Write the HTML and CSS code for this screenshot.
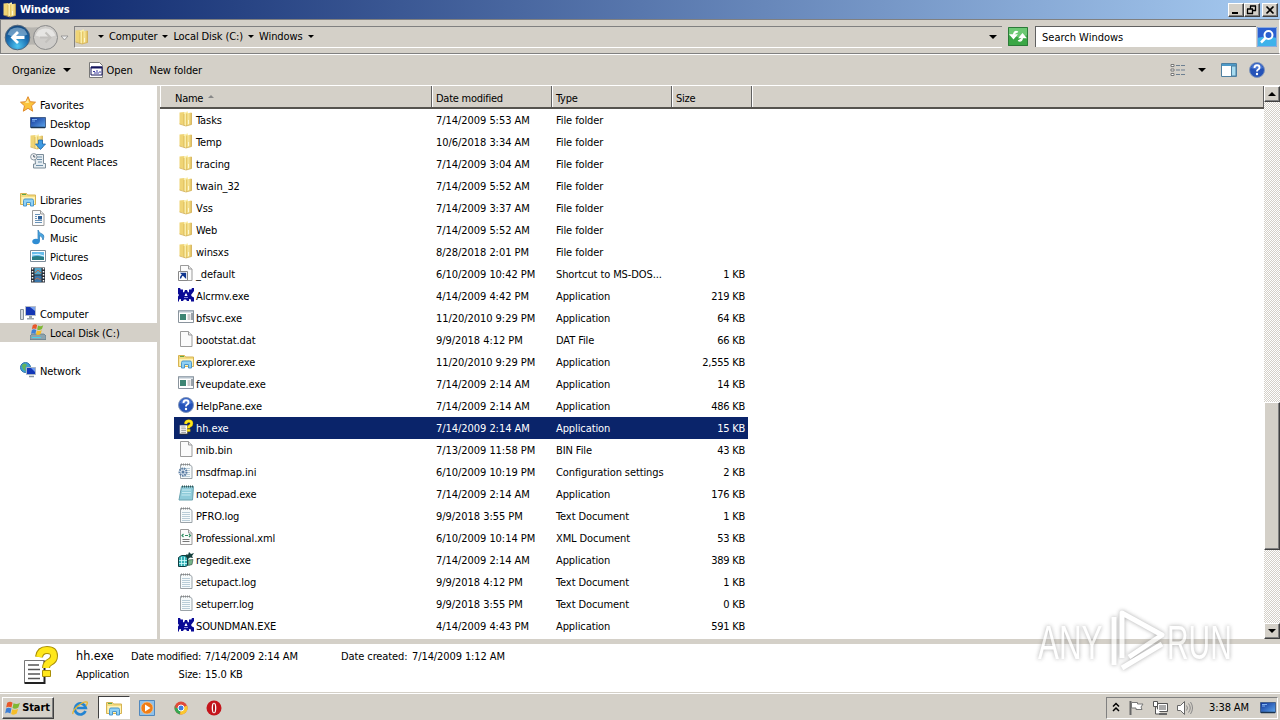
FILE: index.html
```html
<!DOCTYPE html>
<html lang="en">
<head>
    <meta charset="UTF-8">
    <title>Windows</title>
    <link rel="stylesheet" href="styles.css">
</head>
<body>
    <!-- Icons used more than once -->
    <svg class="defs" width="0" height="0">
        <defs>
            <linearGradient id="gold" x1="0" x2="1">
                <stop offset="0" stop-color="#e2bf55"/>
                <stop offset=".4" stop-color="#f8e79b"/>
                <stop offset="1" stop-color="#e0bd58"/>
            </linearGradient>
            <radialGradient id="blueBall" cx=".5" cy=".85" r=".9">
                <stop offset="0" stop-color="#4fc6f2"/>
                <stop offset=".5" stop-color="#1a6db0"/>
                <stop offset="1" stop-color="#123f73"/>
            </radialGradient>
            <linearGradient id="screen" x1="0" x2="1" y1="0" y2="1">
                <stop offset="0" stop-color="#0d2f94"/>
                <stop offset="1" stop-color="#5fa8ee"/>
            </linearGradient>
        </defs>
        <symbol id="folder" viewBox="0 0 16 16">
            <path d="M1.500 1.500l5-.5v13l-5-1z" fill="#efd475"/>
            <path d="M6 2l3-1.500h1v13l-4 1.500z" fill="#faeea9"/>
            <path d="M8 2.500l5.500-1v12l-5.500 1.500z" fill="url(#gold)"/>
            <path d="M6 3v11.500" stroke="#d6b04a" stroke-width=".7"/>
            <path d="M13.500 2v11.500l-5.500 1.500-6.500-2" fill="none" stroke="#cda748" stroke-width=".7"/>
            <path d="M10.500 9v4" stroke="#fff8d0"/>
        </symbol>
        <symbol id="page" viewBox="0 0 16 16">
            <path d="M2.500 .5h8l3.500 3.500v11.500h-11.500z" fill="#fbfbfb" stroke="#9b9b9b"/>
            <path d="M10.500 .5v3.500h3.500" fill="#e8e8e8" stroke="#9b9b9b"/>
        </symbol>
        <symbol id="text" viewBox="0 0 16 16">
            <path d="M2.500 1.500h9l2.500 2v12h-11.500z" fill="#f6fafb" stroke="#9ba3a8"/>
            <path d="M3 1.500h9" stroke="#888" stroke-width="2" stroke-dasharray="1 1"/>
            <path d="M4 5.500h8M4 7.500h8M4 9.500h8M4 11.500h8M4 13.500h8" stroke="#b9cdd8"/>
        </symbol>
        <symbol id="app" viewBox="0 0 16 16">
            <path d="M.5 1.500h15v12h-15z" fill="#fff" stroke="#8a949d"/>
            <path d="M1 2.500h14" stroke="#b7c2cc" stroke-width="2"/>
            <path d="M2 5h6v6h-6z" fill="#3d8573"/>
            <path d="M9.500 6h3M9.500 8h3M9.500 10h3" stroke="#999"/>
            <path d="M14 4v7" stroke="#345"/>
        </symbol>
        <symbol id="crab" viewBox="0 0 16 16">
            <path d="M0 1h2l1 2 1-1 1 1v2l1 .5 1-2.500h2l1 2.500 1-.5v-2l1-1 1 1 1-2h2v3l-3 4 1 1.500 2 1v4h-3v-2l-2-.5v2h-2l-1-1.500h-2l-1 1.500h-2v-2l-2 .5v2h-3v-4l2-1 1-1.500-3-4z" fill="#0a0a96"/>
            <path d="M6.500 9l1-2.500h1l1 2.500z" fill="#fff"/>
            <path d="M6 10.500h4" stroke="#8888d8"/>
        </symbol>
        <symbol id="explorer" viewBox="0 0 16 16">
            <path d="M.5 2.500h6l1 1.500h8v9.500h-15z" fill="#f4dc81" stroke="#d6b352"/>
            <path d="M1.500 6h13.500v7h-13.500z" fill="#fff2b5"/>
            <path d="M2 3.500h4" stroke="#5ea64c"/>
            <path d="M3.500 15v-5.500q0-1.500 1.500-1.500h7q1.500 0 1.500 1.500v5.500h-3v-3.500h-4v3.500z" fill="#8fd0f4" stroke="#4a97cc"/>
        </symbol>
        <symbol id="help" viewBox="0 0 16 16">
            <circle cx="8" cy="8" r="7.500" fill="#2452b8" stroke="#7f95bb"/>
            <path d="M2 6a6.200 6 0 0 1 12 0q-6 3-12 0z" fill="#5f8be0" opacity=".6"/>
            <path d="M5.500 6q0-2.700 2.500-2.700t2.500 2.200q0 1.300-1.300 2t-1.200 2" fill="none" stroke="#fff" stroke-width="1.900"/>
            <circle cx="8" cy="12" r="1.200" fill="#fff"/>
        </symbol>
        <symbol id="hh" viewBox="0 0 36 40">
            <path d="M2.500 15.500h20v22h-20z" fill="#fff" stroke="#777"/>
            <path d="M22.500 16v22h-20" fill="none" stroke="#222" stroke-width="2"/>
            <path d="M6 20h11M6 24.500h12M6 29h12M6 33.500h12" stroke="#555" stroke-width="1.500"/>
            <path d="M17 12q1-7 8-7t7 6q0 4-4 6t-4 6" fill="none" stroke="#a88e08" stroke-width="8"/>
            <path d="M17 12q1-7 8-7t7 6q0 4-4 6t-4 6" fill="none" stroke="#ffe71a" stroke-width="6"/>
            <path d="M20.500 25.500h8v6h-8z" fill="#ffe71a" stroke="#a88e08"/>
        </symbol>
        <symbol id="monitor" viewBox="0 0 16 16">
            <path d="M.5 2.500h15v10h-15z" fill="url(#screen)" stroke="#45618c"/>
            <path d="M1 12.500h14" stroke="#1b3450" stroke-width="1.500"/>
            <path d="M2 4.500h5M2 6h3" stroke="#7fb1ef"/>
        </symbol>
        <symbol id="flag" viewBox="0 0 16 16">
            <path d="M2 3q3-2 5 0l-1 4.500q-3-1.500-5 0z" fill="#e8582a"/>
            <path d="M8 3.500q3 1.500 6-.5l-1.500 4.500q-3 2-5.500 .500z" fill="#7fb833"/>
            <path d="M1 8.500q2-1.500 5 0l-1 4.500q-3-1.500-5 0z" fill="#3c7fd6"/>
            <path d="M6.800 9q3 1.500 5.500-.300l-1.300 4.500q-3 1.800-5.300 .300z" fill="#f5bd2a"/>
        </symbol>
    </svg>

    <!-- Title bar -->
    <header class="titlebar">
        <svg class="icon"><use href="#folder"/></svg>
        <h1>Windows</h1>
        <div class="window-buttons">
            <button><svg width="12" height="10"><path d="M2 8h6" stroke="#000" stroke-width="2"/></svg></button>
            <button><svg width="12" height="10"><path d="M4 1h6M4.500 1v3M9.500 1v5M7 5.500h3M1 4h6M1.500 4v5M6.500 4v5M1 8.500h6" stroke="#000" fill="none" stroke-width="1.300"/></svg></button>
            <button class="close"><svg width="12" height="10"><path d="M2.500 1.500l7 7M9.500 1.500l-7 7" stroke="#000" stroke-width="1.700"/></svg></button>
        </div>
    </header>

    <!-- Address bar -->
    <div class="addressbar">
        <svg class="nav-buttons" width="70" height="30" viewBox="0 0 70 30">
            <path d="M14 3q16 5 32 0v22q-16-5-32 0z" fill="#b7b5b0"/>
            <circle cx="15.500" cy="15.500" r="12.300" fill="url(#blueBall)" stroke="#53677c"/>
            <path d="M5.500 12.500a10.500 10 0 0 1 20 0q-10 5-20 0z" fill="#a9cbe4" opacity=".55"/>
            <path d="M22.500 15.500h-11M16 10l-5.500 5.500 5.500 5.500" fill="none" stroke="#fff" stroke-width="2.800"/>
            <circle cx="43.500" cy="15.500" r="12" fill="#cfcdca" stroke="#8b8b8b"/>
            <path d="M33.500 13.500a10.500 10 0 0 1 20 0q-10 4-20 0z" fill="#e6e5e3"/>
            <path d="M38 15.500h10M43.500 10.500l5 5-5 5" fill="none" stroke="#c2c0bd" stroke-width="2"/>
            <path d="M59 14h7l-3.500 4z" fill="#eee" stroke="#8a8a8a" stroke-width=".8"/>
        </svg>
        <div class="path">
            <svg class="icon"><use href="#folder"/></svg>
            <i class="arrow first"></i><span>Computer</span>
            <i class="arrow"></i><span>Local Disk (C:)</span>
            <i class="arrow"></i><span>Windows</span>
            <i class="arrow"></i>
            <i class="arrow big last"></i>
        </div>
        <svg class="refresh" width="20" height="19" viewBox="0 0 20 19">
            <path d="M0 0h20v19h-20z" fill="#3aa745"/>
            <path d="M0 0h20v8q-10 4-20 0z" fill="#6cc873"/>
            <path d="M.5 .5h19v18h-19z" fill="none" stroke="#2c7a38"/>
            <path d="M10 5q-4-2-4.500 3M2.500 8h6l-3 3.500zM10 13.500q4 2 4.500-3M11.500 10.500h6l-3-3.500z" fill="#fff" stroke="#fff" stroke-width="1.300"/>
        </svg>
        <div class="search">Search Windows</div>
        <svg class="search-button" width="20" height="20" viewBox="0 0 20 20">
            <path d="M0 0h20v20h-20z" fill="#2b5fd0"/>
            <path d="M0 11q10-3 20 0v9h-20z" fill="#3fb2ea"/>
            <path d="M.5 .5h19v19h-19z" fill="none" stroke="#8eabdc"/>
            <circle cx="11.500" cy="8" r="4" fill="#2b5fd0" stroke="#fff" stroke-width="2"/>
            <path d="M8.500 11l-4.500 4.500" stroke="#fff" stroke-width="2.500"/>
        </svg>
    </div>

    <!-- Command bar -->
    <div class="toolbar">
        <span class="organize">Organize</span><i class="arrow big"></i>
        <svg class="icon open-icon" viewBox="0 0 16 16">
            <path d="M1.500 .5h10l3 3v12h-13z" fill="#fff" stroke="#777"/>
            <path d="M3 5h11v8h-11z" fill="#fff" stroke="#14145c"/>
            <path d="M3 5.500h11" stroke="#14145c" stroke-width="2"/>
            <path d="M5 9.500h2M8 9h2M11 10h2M6 11h5" stroke="#3b3ba0"/>
        </svg>
        <span class="open">Open</span>
        <span>New folder</span>
        <div class="view-tools">
            <svg width="16" height="14"><path d="M1 1.500h3v2h-3zM1 6h3v2h-3zM1 10.500h3v2h-3z" fill="#fff" stroke="#777"/><path d="M6 2.500h4M11 2.500h4M6 7h4M11 7h4M6 11.500h4M11 11.500h4" stroke="#6c7f91"/></svg>
            <i class="arrow big"></i>
            <svg class="preview" width="16" height="14"><path d="M.5 .5h15v13h-15z" fill="#fff" stroke="#4d7fa0"/><path d="M1 2h14" stroke="#4d9ac8" stroke-width="2"/><path d="M10.500 3h4.500v10h-4.500z" fill="#a7dcf1" stroke="#4d7fa0"/></svg>
            <svg class="icon"><use href="#help"/></svg>
        </div>
    </div>

    <main>
        <!-- Navigation pane -->
        <nav>
            <div class="group">
                <div class="item top"><svg class="icon" viewBox="0 0 16 16"><path d="M8 .7l2.200 5 5.300.5-4 3.600 1.200 5.400-4.700-2.900-4.700 2.900 1.200-5.400-4-3.600 5.300-.5z" fill="#fbc43c" stroke="#e08a2c"/><path d="M8 3l1 4h-4z" fill="#ffe99a"/></svg><span>Favorites</span></div>
                <div class="item"><svg class="icon"><use href="#monitor"/></svg><span>Desktop</span></div>
                <div class="item"><svg class="icon" viewBox="0 0 16 16"><use href="#folder" x="-1" width="16" height="16"/><path d="M8.500 6h4v4h3l-5 5.500-5-5.500h3z" fill="#3f9be3" stroke="#1c64ab" stroke-width=".8"/></svg><span>Downloads</span></div>
                <div class="item"><svg class="icon" viewBox="0 0 16 16"><path d="M4.500 1.500h9v9h2v4.500h-12v-4h2z" fill="#e6edf2" stroke="#7b8c99"/><path d="M7 4h5M7 6.500h5M8 9h4M6 12.500h7" stroke="#6e8fa8"/><circle cx="3.800" cy="3.800" r="3.200" fill="#f5f5f5" stroke="#8896a0"/><path d="M3.800 2v2h1.500" fill="none" stroke="#456"/></svg><span>Recent Places</span></div>
            </div>
            <div class="group">
                <div class="item top"><svg class="icon"><use href="#explorer"/></svg><span>Libraries</span></div>
                <div class="item"><svg class="icon" viewBox="0 0 16 16"><use href="#page" width="16" height="16"/><path d="M5 4.500h5M5 6.500h2M5 8.500h2M5 10.500h7M5 12.500h7" stroke="#6a93b8"/><path d="M8 6h4v3.500h-4z" fill="#2d5f97"/></svg><span>Documents</span></div>
                <div class="item"><svg class="icon" viewBox="0 0 16 16"><path d="M8 12v-11q1 3 4 4t1 6q0-3-3.500-4.500v6" fill="#4aa6e0" stroke="#2575b4" stroke-width=".7"/><ellipse cx="6" cy="12.500" rx="3.700" ry="2.800" fill="#2f8dd3"/></svg><span>Music</span></div>
                <div class="item"><svg class="icon" viewBox="0 0 16 16"><path d="M.5 2.500h15v11h-15z" fill="#fff" stroke="#7d8d9b"/><path d="M2 4h12v8h-12z" fill="#67bceb"/><path d="M2 9q4-2 12 0v3h-12z" fill="#287d86"/><path d="M2 7q6-2 12 1" stroke="#e1f5ff" fill="none"/></svg><span>Pictures</span></div>
                <div class="item"><svg class="icon" viewBox="0 0 16 16"><path d="M1 .5h14v15h-14z" fill="#272c35"/><path d="M2.500 1v14M13.500 1v14" stroke="#fff" stroke-width="1.500" stroke-dasharray="1.500 1.500"/><path d="M4.500 1h7v6.500h-7z" fill="#55a5c9"/><path d="M4.500 8.500h7v6.500h-7z" fill="#3a77ab"/><path d="M5 6l3-3 3 3M5 13l2-2 4 2" stroke="#b46b50" fill="none"/></svg><span>Videos</span></div>
            </div>
            <div class="group">
                <div class="item top"><svg class="icon" viewBox="0 0 16 16"><path d="M.5 4.500h3v10h-3z" fill="#d5dade" stroke="#86919a"/><path d="M5.500 1.500h10v9h-10z" fill="#1436b4" stroke="#b7bec8"/><path d="M10 2h5v4z" fill="#7ba4f0"/><path d="M9 11h3v2h2v1.500h-7v-1.500h2z" fill="#9aa5ae"/></svg><span>Computer</span></div>
                <div class="item selected"><svg class="icon" viewBox="0 0 16 16"><path d="M2 10h12l2 2v3.500h-16v-3.500z" fill="#8da3ae" stroke="#5a7482" stroke-width=".7"/><path d="M2 13.500h9" stroke="#49d3e8"/><use href="#flag" x="1" y="-1.500" width="14" height="14"/></svg><span>Local Disk (C:)</span></div>
            </div>
            <div class="group">
                <div class="item top"><svg class="icon" viewBox="0 0 16 16"><circle cx="5.500" cy="5.500" r="5" fill="#3e9ed4" stroke="#2e73a8"/><path d="M2 3q3-3 5 0l-2 3 1 3q-4-1-4-6z" fill="#63b45a"/><path d="M6.500 5.500h9v7h-9z" fill="#1237b8" stroke="#aab6c5"/><path d="M11 6h4v4z" fill="#6f9cf0"/><path d="M9 14.500h5" stroke="#8795a2" stroke-width="1.500"/></svg><span>Network</span></div>
            </div>
        </nav>

        <!-- File list -->
        <section class="files">
            <div class="head">
                <span>Name<i class="sort"></i></span><span>Date modified</span><span>Type</span><span>Size</span><span></span>
            </div>
            <div class="row"><svg class="icon"><use href="#folder"/></svg><span>Tasks</span><span>7/14/2009 5:53 AM</span><span>File folder</span></div>
            <div class="row"><svg class="icon"><use href="#folder"/></svg><span>Temp</span><span>10/6/2018 3:34 AM</span><span>File folder</span></div>
            <div class="row"><svg class="icon"><use href="#folder"/></svg><span>tracing</span><span>7/14/2009 3:04 AM</span><span>File folder</span></div>
            <div class="row"><svg class="icon"><use href="#folder"/></svg><span>twain_32</span><span>7/14/2009 5:52 AM</span><span>File folder</span></div>
            <div class="row"><svg class="icon"><use href="#folder"/></svg><span>Vss</span><span>7/14/2009 3:37 AM</span><span>File folder</span></div>
            <div class="row"><svg class="icon"><use href="#folder"/></svg><span>Web</span><span>7/14/2009 5:52 AM</span><span>File folder</span></div>
            <div class="row"><svg class="icon"><use href="#folder"/></svg><span>winsxs</span><span>8/28/2018 2:01 PM</span><span>File folder</span></div>
            <div class="row"><svg class="icon" viewBox="0 0 16 16"><use href="#page" width="16" height="16"/><path d="M.5 6.500h9v9h-9z" fill="#fff" stroke="#888"/><path d="M2.500 13.500q0-3 3-4M3.500 8.500h4v4z" fill="#12378f" stroke="#12378f" stroke-width="1.300"/></svg><span>_default</span><span>6/10/2009 10:42 PM</span><span>Shortcut to MS-DOS...</span><span>1 KB</span></div>
            <div class="row"><svg class="icon"><use href="#crab"/></svg><span>Alcrmv.exe</span><span>4/14/2009 4:42 PM</span><span>Application</span><span>219 KB</span></div>
            <div class="row"><svg class="icon"><use href="#app"/></svg><span>bfsvc.exe</span><span>11/20/2010 9:29 PM</span><span>Application</span><span>64 KB</span></div>
            <div class="row"><svg class="icon"><use href="#page"/></svg><span>bootstat.dat</span><span>9/9/2018 4:12 PM</span><span>DAT File</span><span>66 KB</span></div>
            <div class="row"><svg class="icon"><use href="#explorer"/></svg><span>explorer.exe</span><span>11/20/2010 9:29 PM</span><span>Application</span><span>2,555 KB</span></div>
            <div class="row"><svg class="icon"><use href="#app"/></svg><span>fveupdate.exe</span><span>7/14/2009 2:14 AM</span><span>Application</span><span>14 KB</span></div>
            <div class="row"><svg class="icon"><use href="#help"/></svg><span>HelpPane.exe</span><span>7/14/2009 2:14 AM</span><span>Application</span><span>486 KB</span></div>
            <div class="row active"><svg class="icon"><use href="#hh"/></svg><span>hh.exe</span><span>7/14/2009 2:14 AM</span><span>Application</span><span>15 KB</span></div>
            <div class="row"><svg class="icon"><use href="#page"/></svg><span>mib.bin</span><span>7/13/2009 11:58 PM</span><span>BIN File</span><span>43 KB</span></div>
            <div class="row"><svg class="icon" viewBox="0 0 16 16"><use href="#text" width="16" height="16"/><circle cx="5" cy="9" r="3.500" fill="#dfe9f2" stroke="#5b7da3" stroke-width="2" stroke-dasharray="1.600 .8"/><circle cx="5" cy="9" r="1.500" fill="#5b7da3"/></svg><span>msdfmap.ini</span><span>6/10/2009 10:19 PM</span><span>Configuration settings</span><span>2 KB</span></div>
            <div class="row"><svg class="icon" viewBox="0 0 16 16"><path d="M3.500 1.500h12l-1 13.500h-13.500z" fill="#8ecbd9" stroke="#6ba3b0"/><path d="M4 1.500h11" stroke="#355" stroke-width="2" stroke-dasharray="1 1"/><path d="M4 5h9M4 7.500h9M3.500 10h9" stroke="#c5eaf1"/></svg><span>notepad.exe</span><span>7/14/2009 2:14 AM</span><span>Application</span><span>176 KB</span></div>
            <div class="row"><svg class="icon"><use href="#text"/></svg><span>PFRO.log</span><span>9/9/2018 3:55 PM</span><span>Text Document</span><span>1 KB</span></div>
            <div class="row"><svg class="icon" viewBox="0 0 16 16"><use href="#page" width="16" height="16"/><path d="M5.500 5l-1.500 1.500 1.500 1.500M11 5l1.500 1.500-1.500 1.500M7 6.500h3" fill="none" stroke="#2f8f62" stroke-width="1.200"/><path d="M4.500 10.500h7M4.500 12.500h7" stroke="#777"/></svg><span>Professional.xml</span><span>6/10/2009 10:14 PM</span><span>XML Document</span><span>53 KB</span></div>
            <div class="row"><svg class="icon" viewBox="0 0 16 16"><path d="M.5 6.500l3-2h6v10l-2 1h-7z" fill="#35b0b5" stroke="#103c40"/><path d="M1 9.500h8M1 12.500h8M3.500 6v9M6.500 6v9" stroke="#d5ffff" stroke-width=".8"/><path d="M7 5l2-2 1 1 1-3 2 2 3-1-2 3 1 2-3-.5-2 1.500z" fill="#153f3c"/><path d="M10 9l5-.5-1 5-3.500 1z" fill="#77b58b" stroke="#2a4b3c" stroke-width=".6"/></svg><span>regedit.exe</span><span>7/14/2009 2:14 AM</span><span>Application</span><span>389 KB</span></div>
            <div class="row"><svg class="icon"><use href="#text"/></svg><span>setupact.log</span><span>9/9/2018 4:12 PM</span><span>Text Document</span><span>1 KB</span></div>
            <div class="row"><svg class="icon"><use href="#text"/></svg><span>setuperr.log</span><span>9/9/2018 3:55 PM</span><span>Text Document</span><span>0 KB</span></div>
            <div class="row"><svg class="icon"><use href="#crab"/></svg><span>SOUNDMAN.EXE</span><span>4/14/2009 4:43 PM</span><span>Application</span><span>591 KB</span></div>
        </section>

        <div class="scrollbar">
            <button><i class="up"></i></button>
            <div class="thumb"></div>
            <button><i class="down"></i></button>
        </div>
    </main>

    <!-- Details pane -->
    <section class="details">
        <svg class="big-icon" width="36" height="40"><use href="#hh"/></svg>
        <div class="col name"><b>hh.exe</b><span>Application</span></div>
        <div class="col labels"><span>Date modified:</span><span>Size:</span></div>
        <div class="col values"><span>7/14/2009 2:14 AM</span><span>15.0 KB</span></div>
        <div class="col created"><span>Date created:</span></div>
        <div class="col"><span>7/14/2009 1:12 AM</span></div>
    </section>

    <!-- Taskbar -->
    <footer>
        <button class="start"><svg width="18" height="17" viewBox="0 0 14 15"><use href="#flag" width="15" height="16"/></svg>Start</button>
        <div class="launch"><svg class="icon" viewBox="0 0 16 16"><path d="M13.500 11a5.500 5.500 0 1 1 .3-3h-9" fill="none" stroke="#2384d2" stroke-width="2.700"/><path d="M1 14q-1-3 5-8t9-4q1 1-1 4" fill="none" stroke="#e6b52e" stroke-width="1.300"/></svg></div>
        <div class="launch open-app"><svg class="icon"><use href="#explorer"/></svg></div>
        <div class="launch"><svg class="icon" viewBox="0 0 16 16"><path d="M.5 .5h15v15h-15z" fill="#8fc1ea" stroke="#5188bd"/><circle cx="8" cy="8" r="6" fill="#f07d16" stroke="#fbc68c" stroke-width=".7"/><path d="M6 4.500l5.500 3.500-5.500 3.500z" fill="#fff"/></svg></div>
        <div class="launch"><svg class="icon" viewBox="0 0 16 16"><circle cx="8" cy="8" r="6.500" fill="#e04a3a"/><path d="M8 8h-5.500l-.2-3a6.500 6.500 0 0 0 4.700 9.400z" fill="#36a852"/><path d="M8 8l6-2.500a6.500 6.500 0 0 1-7 9z" fill="#fbc82e"/><circle cx="8" cy="8" r="3" fill="#3f7ee0" stroke="#fff"/></svg></div>
        <div class="launch"><svg class="icon" viewBox="0 0 16 16"><circle cx="8" cy="8" r="7.500" fill="#c4151c"/><ellipse cx="8" cy="8" rx="2.300" ry="5.300" fill="#fff"/><ellipse cx="8" cy="8" rx="1" ry="4.500" fill="#b01218"/></svg></div>
        <div class="tray">
            <svg width="8" height="11"><path d="M1 4.500l3-3 3 3M1 9l3-3 3 3" fill="none" stroke="#000" stroke-width="1.500"/></svg>
            <svg class="tray-flag" width="17" height="16"><path d="M2.500 1v14" stroke="#666" stroke-width="2"/><path d="M3.500 2.500h6v1.500h5.500l-2 3 1 2.500h-6v-1.500h-4.500z" fill="#fff" stroke="#777"/></svg>
            <svg class="tray-net" width="17" height="16"><path d="M5.500 3.500h10v8h-10z" fill="#aaa" stroke="#555"/><path d="M6.500 4.500h8v6h-8z" fill="none" stroke="#fff"/><path d="M1.500 1.500h4v5h-4zM3.500 7v7h6" fill="#fff" stroke="#555"/><path d="M7 14h8" stroke="#666" stroke-width="2"/></svg>
            <svg class="tray-sound" width="17" height="16"><path d="M1.500 5.500h3l4-4v13l-4-4h-3z" fill="#fff" stroke="#666"/><path d="M10.500 5.500q2 2.500 0 5M12.500 3.500q3.500 4.500 0 9M14.500 2q4 6 0 12" fill="none" stroke="#888"/></svg>
            <span>3:38 AM</span>
            <svg class="icon"><use href="#monitor"/></svg>
        </div>
    </footer>

    <!-- Watermark -->
    <svg class="watermark" width="240" height="84" viewBox="0 0 240 84">
        <text transform="translate(8 59) scale(.64 1)">ANY</text>
        <path d="M84 17v48M92 58V13l40 22-33 22M92 68l40-24"/>
        <text transform="translate(137 59) scale(.61 1)">RUN</text>
    </svg>
</body>
</html>
```
FILE: styles.css
```css
* {
    box-sizing: border-box;
}

body {
    margin: 0;
    width: 1280px;
    height: 720px;
    overflow: hidden;
    display: flex;
    flex-direction: column;
    background: #d4d0c8;
    color: #000;
    font: 11px/14px "DejaVu Sans Condensed", "DejaVu Sans", sans-serif;
    letter-spacing: -0.1px;
    white-space: nowrap;
}

.defs {
    position: absolute;
}

.icon {
    width: 16px;
    height: 16px;
    flex: none;
}

button {
    display: flex;
    align-items: center;
    justify-content: center;
    padding: 0;
    background: #d4d0c8;
    border: 1px solid;
    border-color: #fff #404040 #404040 #fff;
    box-shadow: inset -1px -1px #808080;
    font: inherit;
}

.arrow {
    flex: none;
    border: 3px solid transparent;
    border-top-color: #000;
    border-bottom: 0;
}

.arrow.big {
    border-width: 4px 4px 0;
}

/* Title bar */
.titlebar {
    height: 19px;
    flex: none;
    display: flex;
    align-items: center;
    padding: 0 2px;
    background: linear-gradient(90deg, #0a246a, #a6caf0);
    color: #fff;
}

.titlebar h1 {
    margin: 0 auto 0 2px;
    font-size: 11px;
    letter-spacing: -0.1px;
}

.window-buttons {
    display: flex;
}

.window-buttons button {
    width: 16px;
    height: 14px;
}

.window-buttons .close {
    margin-left: 2px;
}

/* Address bar */
.addressbar {
    height: 35px;
    flex: none;
    display: flex;
    align-items: center;
    padding-left: 1px;
    border: 1px solid #808080;
    border-right-color: #fff;
    box-shadow: 0 1px #fff;
}

.path {
    width: 928px;
    height: 22px;
    margin-left: 2px;
    display: flex;
    align-items: center;
    border: 1px solid #808080;
    border-width: 1px 0 1px 1px;
    border-bottom-color: #fff;
}

.path .icon {
    margin-left: -1px;
}

.path .first {
    margin-left: 8px;
}

.path span {
    margin: 0 5px;
}

.path .last {
    margin: 0 5px 0 auto;
}

.refresh {
    margin: 0 7px 0 6px;
}

.search {
    width: 221px;
    height: 21px;
    padding: 4px 6px;
    background: #fff;
    border: 1px solid #606060;
    border-width: 1px 0 0 1px;
    letter-spacing: 0;
}

.search-button {
    margin-left: 1px;
}

/* Command bar */
.toolbar {
    height: 31px;
    flex: none;
    display: flex;
    align-items: center;
    padding: 0 15px 0 12px;
    border-top: 1px solid #fff;
}

.toolbar span {
    padding-top: 1px;
}

.toolbar .organize {
    margin-right: 7px;
}

.open-icon {
    margin: 0 3px 0 17px;
}

.toolbar .open {
    margin-right: 17px;
}

.view-tools {
    display: flex;
    align-items: center;
    margin-left: auto;
}

.view-tools .arrow {
    margin: 0 15px 0 12px;
}

.view-tools .preview {
    margin-right: 12px;
}

/* Explorer body */
main {
    height: 554px;
    flex: none;
    display: flex;
    background: #fff;
    border-top: 1px solid #fff;
}

nav {
    width: 160px;
    padding-top: 9px;
    border-right: 3px solid #d4d0c8;
}

.group {
    margin-bottom: 19px;
}

.item {
    height: 19px;
    display: flex;
    align-items: center;
    gap: 4px;
    padding-left: 30px;
}

.item.top {
    padding-left: 20px;
}

.item .icon {
    margin-bottom: 1px;
}

.item span {
    padding-top: 2px;
}

.item.selected {
    background: #d4d0c8;
}

/* File list */
.files {
    flex: 1;
}

.head {
    height: 23px;
    display: grid;
    grid-template-columns: 272px 120px 120px 80px 1fr;
    background: #d4d0c8;
    border-bottom: 2px solid #55534e;
}

.head span {
    padding: 6px 3px 0;
    border-left: 1px solid #fff;
    border-right: 1px solid #606060;
    letter-spacing: -0.25px;
}

.head span:first-child {
    padding-left: 14px;
}

.sort {
    display: inline-block;
    margin: 0 0 4px 5px;
    border: 3px solid transparent;
    border-bottom-color: #888;
    border-top: 0;
}

.row {
    width: 574px;
    height: 22px;
    margin-left: 14px;
    padding: 0 3px 0 4px;
    display: grid;
    grid-template-columns: 18px 240px 120px 120px 69px;
    align-items: center;
}

.row .icon {
    margin-bottom: 2px;
}

.row span {
    padding-top: 1px;
}

.row span:nth-child(3) {
    letter-spacing: -0.05px;
}

.row span:nth-child(5) {
    text-align: right;
    letter-spacing: -0.25px;
}

.row.active {
    background: #0a246a;
    color: #fff;
}

.scrollbar {
    width: 16px;
    display: flex;
    flex-direction: column;
    background: repeating-conic-gradient(#d4d0c8 0 25%, #fff 0 50%) 0 0 / 2px 2px;
}

.scrollbar button {
    height: 16px;
}

.thumb {
    height: 148px;
    margin: 300px 0 auto;
    background: #d4d0c8;
    border: 1px solid;
    border-color: #fff #404040 #404040 #fff;
    box-shadow: inset -1px -1px #808080;
}

.up,
.down {
    border: 4px solid transparent;
}

.up {
    border-top: 0;
    border-bottom-color: #000;
}

.down {
    border-bottom: 0;
    border-top-color: #000;
}

/* Details pane */
.details {
    height: 53px;
    flex: none;
    display: flex;
    padding-left: 22px;
    background: #fff;
    border-top: 5px solid #d4d0c8;
}

.big-icon {
    margin-top: 1px;
}

.col {
    display: flex;
    flex-direction: column;
    gap: 4px;
    padding-top: 6px;
}

.col.name {
    width: 55px;
    margin-left: 18px;
    letter-spacing: -0.2px;
}

.col b {
    font-size: 12.5px;
    font-weight: normal;
    letter-spacing: 0;
    margin-top: -1px;
    padding-bottom: 1px;
}

.col.labels {
    width: 70px;
    align-items: flex-end;
    margin-right: 4px;
    letter-spacing: -0.25px;
}

.col.values {
    width: 136px;
}

.col.created {
    width: 71px;
    letter-spacing: -0.1px;
}

/* Taskbar */
footer {
    height: 28px;
    display: flex;
    align-items: center;
    padding: 2px 2px 0;
    border-top: 1px solid #d4d0c8;
    box-shadow: inset 0 1px #fff;
}

.start {
    width: 52px;
    height: 22px;
    margin-right: 10px;
    padding-right: 2px;
    font-weight: bold;
    letter-spacing: -0.1px;
}

.launch {
    width: 32px;
    height: 23px;
    margin-right: 1.5px;
    display: flex;
    align-items: center;
    justify-content: center;
}

.open-app {
    background: #fff;
    border: 1px solid;
    border-color: #404040 #fff #fff #404040;
}

.tray {
    width: 172px;
    height: 22px;
    margin-left: auto;
    padding-left: 5px;
    display: flex;
    align-items: center;
    border: 1px solid;
    border-color: #808080 #fff #fff #808080;
}

.tray-flag {
    margin: 0 7px 0 8px;
}

.tray-net {
    margin-right: 7px;
}

.tray span {
    margin: 0 11px 0 16px;
}

/* Watermark */
.watermark {
    position: absolute;
    left: 1030px;
    top: 600px;
    font: 49px "Liberation Sans", sans-serif;
    letter-spacing: 0;
    fill: #fff;
    filter: drop-shadow(0 0 2px #888);
    opacity: 0.7;
}

.watermark path {
    fill: none;
    stroke: #fff;
    stroke-width: 5px;
    stroke-linejoin: round;
}
```
